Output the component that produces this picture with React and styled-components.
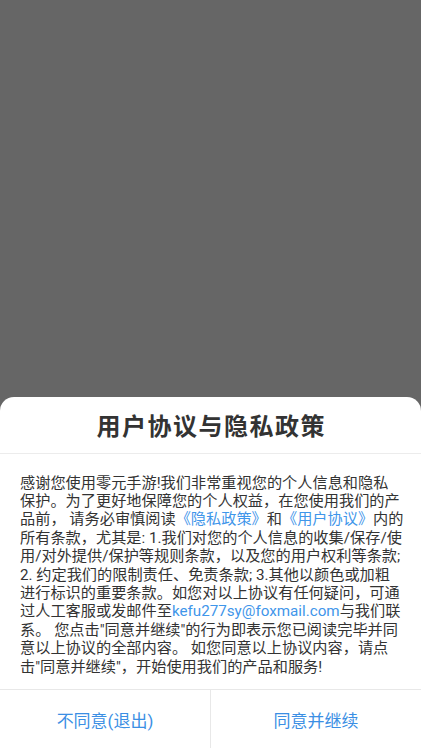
import React from "react";
import styled, { createGlobalStyle } from "styled-components";

const Global = createGlobalStyle`
  html, body { margin: 0; padding: 0; background: #666666; }
  body { font-family: Roboto, "Noto Sans CJK SC", sans-serif; }
  * { box-sizing: border-box; }
`;

const Screen = styled.div`
  min-height: 100vh;
  display: flex;
  flex-direction: column;
  justify-content: flex-end;
  background: #666666;
`;

const Sheet = styled.div`
  background: #ffffff;
  border-radius: 14px 14px 0 0;
  display: flex;
  flex-direction: column;
`;

const Header = styled.div`
  height: 57px;
  display: flex;
  align-items: center;
  justify-content: center;
  border-bottom: 1px solid #ececec;
`;

const Title = styled.h1`
  margin: 0;
  padding-left: 1.5px;
  font-family: "Noto Sans CJK SC", sans-serif;
  font-size: 24px;
  letter-spacing: 1.5px;
  font-weight: 700;
  color: #333333;
`;

const Body = styled.div`
  padding: 20px 20px 13px 20px;
  font-size: 15.2px;
  line-height: 18.4px;
  color: #333333;
`;

const Line = styled.div`
  white-space: nowrap;
`;

const Link = styled.span`
  color: #3f96ea;
`;

const Footer = styled.div`
  height: 59px;
  display: flex;
  border-top: 1px solid #e8e8e8;
`;

const Action = styled.button`
  flex: 1;
  border: none;
  background: transparent;
  font-family: Roboto, "Noto Sans CJK SC", sans-serif;
  font-size: 17px;
  color: #3b8fe4;
  padding: 0;
  border-left: ${(p) => (p.$divided ? "1px solid #e8e8e8" : "none")};
  cursor: pointer;
`;

export default function App() {
  return (
    <>
      <Global />
      <Screen>
        <Sheet>
          <Header>
            <Title>用户协议与隐私政策</Title>
          </Header>
          <Body>
            <Line>感谢您使用零元手游!我们非常重视您的个人信息和隐私</Line>
            <Line>保护。为了更好地保障您的个人权益，在您使用我们的产</Line>
            <Line>
              品前， 请务必审慎阅读<Link>《隐私政策》</Link>和<Link>《用户协议》</Link>内的
            </Line>
            <Line>所有条款，尤其是: 1.我们对您的个人信息的收集/保存/使</Line>
            <Line>用/对外提供/保护等规则条款，以及您的用户权利等条款;</Line>
            <Line>2. 约定我们的限制责任、免责条款; 3.其他以颜色或加粗</Line>
            <Line>进行标识的重要条款。如您对以上协议有任何疑问，可通</Line>
            <Line>
              过人工客服或发邮件至<Link>kefu277sy@foxmail.com</Link>与我们联
            </Line>
            <Line>系。 您点击"同意并继续"的行为即表示您已阅读完毕并同</Line>
            <Line>意以上协议的全部内容。 如您同意以上协议内容，请点</Line>
            <Line>击"同意并继续"，开始使用我们的产品和服务!</Line>
          </Body>
          <Footer>
            <Action>不同意(退出)</Action>
            <Action $divided>同意并继续</Action>
          </Footer>
        </Sheet>
      </Screen>
    </>
  );
}
